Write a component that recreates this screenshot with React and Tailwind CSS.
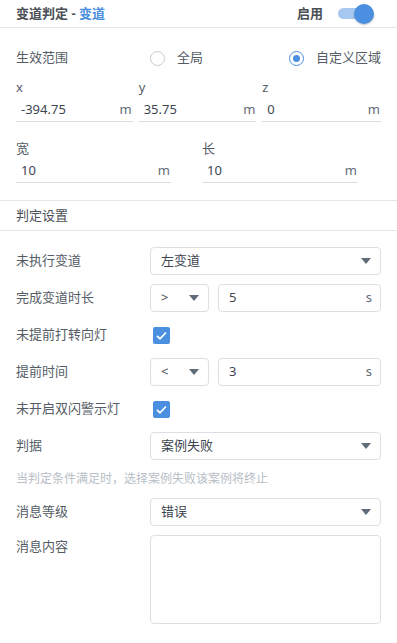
import React from 'react';

const font = { fontFamily: '"Noto Sans", "Noto Sans CJK SC", sans-serif' };

function Caret({ className = '' }) {
  return (
    <svg className={className} width="10" height="6" viewBox="0 0 10 6">
      <path d="M0 0h10L5 6z" fill="#5f6b78" />
    </svg>
  );
}

function Select({ value, className = '' }) {
  return (
    <div className={`flex h-[28px] items-center justify-between rounded-[4px] border border-[#dcdfe6] bg-white pl-[10px] pr-[9px] ${className}`}>
      <span className="text-[13px] text-[#3d4650]">{value}</span>
      <Caret />
    </div>
  );
}

function UnitInput({ value, unit, className = '' }) {
  return (
    <div className={`flex h-[28px] items-center justify-between rounded-[4px] border border-[#dcdfe6] bg-white pl-[10px] pr-[8px] ${className}`}>
      <span className="text-[13px] text-[#3d4650]">{value}</span>
      <span className="text-[13px] text-[#5f6b78]">{unit}</span>
    </div>
  );
}

function LineInput({ label, value, unit, className = '' }) {
  return (
    <div className={`flex flex-col ${className}`}>
      <span className="h-[18px] text-[13px] leading-[18px] text-[#555c66]">{label}</span>
      <div className="mt-[2px] flex h-[24px] items-center justify-between border-b border-[#d9dde2] pl-[5px] pr-[1px]">
        <span className="text-[13px] text-[#3d4650]">{value}</span>
        <span className="text-[13px] text-[#5f6b78]">{unit}</span>
      </div>
    </div>
  );
}

function Check() {
  return (
    <div className="ml-[3px] flex h-[17px] w-[17px] items-center justify-center rounded-[2px] bg-[#4a8fe0]">
      <svg width="13" height="13" viewBox="0 0 13 13">
        <path d="M2 6.8l3 3L11 3.5" fill="none" stroke="#fff" strokeWidth="1.8" />
      </svg>
    </div>
  );
}

function Row({ label, children, className = '' }) {
  return (
    <div className={`flex h-[28px] items-center ${className}`}>
      <span className="w-[134px] shrink-0 text-[13px] text-[#555c66]">{label}</span>
      <div className="flex flex-1 items-center">{children}</div>
    </div>
  );
}

export default function App() {
  return (
    <div className="w-[397px] bg-white" style={font}>
      {/* Header */}
      <div className="flex h-[28px] items-center justify-between border-b border-[#e4e7ea] pl-[16px] pr-[24px]">
        <span className="text-[13px] font-bold text-[#4a4f55]">
          变道判定 - <span className="text-[#4a8fe0]">变道</span>
        </span>
        <div className="flex items-center">
          <span className="text-[13px] font-bold text-[#4a4f55]">启用</span>
          <div className="relative ml-[15px] h-[11px] w-[35px] rounded-full bg-[#a7c8f0]">
            <div className="absolute -top-[4.5px] left-[16px] h-[20px] w-[20px] rounded-full bg-[#4a8fe0] shadow-[0_1px_2px_rgba(0,0,0,0.25)]" />
          </div>
        </div>
      </div>

      {/* Range */}
      <div className="px-[16px] pb-[17px]">
        <div className="mt-[20px] flex h-[20px] items-center">
          <span className="w-[134px] text-[13px] text-[#555c66]">生效范围</span>
          <div className="flex flex-1 items-center justify-between">
            <div className="flex items-center">
              <div className="h-[15px] w-[15px] rounded-full border-[1.5px] border-[#c7cbd0]" />
              <span className="ml-[12px] text-[13px] text-[#555c66]">全局</span>
            </div>
            <div className="flex items-center">
              <div className="flex h-[15px] w-[15px] items-center justify-center rounded-full border-[1.5px] border-[#4a8fe0]">
                <div className="h-[7px] w-[7px] rounded-full bg-[#4a8fe0]" />
              </div>
              <span className="ml-[12px] text-[13px] text-[#555c66]">自定义区域</span>
            </div>
          </div>
        </div>
        <div className="mt-[10px] flex gap-[6px]">
          <LineInput className="w-[117px]" label="x" value="-394.75" unit="m" />
          <LineInput className="w-[118px]" label="y" value="35.75" unit="m" />
          <LineInput className="w-[119px]" label="z" value="0" unit="m" />
        </div>
        <div className="mt-[17px] flex gap-[31px]">
          <LineInput className="w-[155px]" label="宽" value="10" unit="m" />
          <LineInput className="w-[156px]" label="长" value="10" unit="m" />
        </div>
      </div>

      {/* Judgement settings */}
      <div className="flex h-[31px] items-center border-y border-[#e4e7ea] pl-[16px]">
        <span className="text-[13px] text-[#4a4f55]">判定设置</span>
      </div>

      <div className="flex flex-col gap-[9px] px-[16px] pt-[16px]">
        <Row label="未执行变道">
          <Select className="flex-1" value="左变道" />
        </Row>
        <Row label="完成变道时长">
          <Select className="w-[59px]" value=">" />
          <UnitInput className="ml-[9px] flex-1" value="5" unit="s" />
        </Row>
        <Row label="未提前打转向灯">
          <Check />
        </Row>
        <Row label="提前时间">
          <Select className="w-[59px]" value="<" />
          <UnitInput className="ml-[9px] flex-1" value="3" unit="s" />
        </Row>
        <Row label="未开启双闪警示灯">
          <Check />
        </Row>
        <Row label="判据">
          <Select className="flex-1" value="案例失败" />
        </Row>
      </div>
      <div className="mt-[9px] px-[16px] text-[12px] leading-[20px] text-[#b7bec6]">
        当判定条件满足时，选择案例失败该案例将终止
      </div>
      <div className="flex flex-col gap-[9px] px-[16px] pb-[18px] pt-[9px]">
        <Row label="消息等级">
          <Select className="flex-1" value="错误" />
        </Row>
        <div className="flex">
          <span className="mt-[2px] w-[134px] shrink-0 text-[13px] text-[#555c66]">消息内容</span>
          <div className="h-[89px] flex-1 rounded-[4px] border border-[#dcdfe6] bg-white" />
        </div>
      </div>
    </div>
  );
}
